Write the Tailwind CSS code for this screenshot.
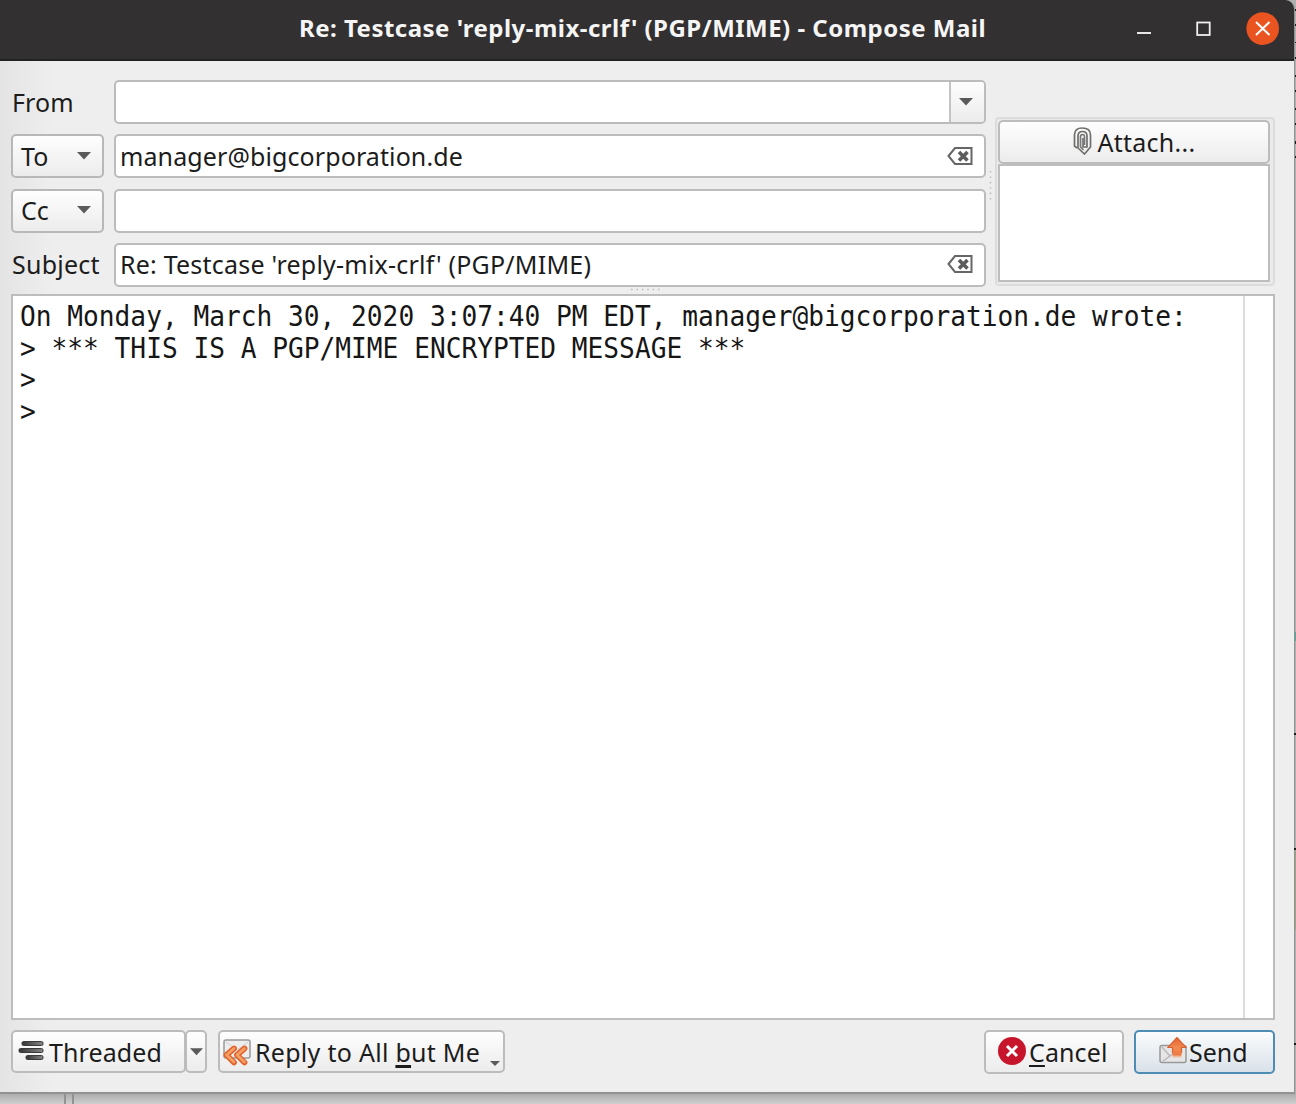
<!DOCTYPE html>
<html lang="en">
<head>
<meta charset="utf-8">
<title>Compose Mail</title>
<script src="https://cdn.jsdelivr.net/npm/@tailwindcss/browser@4"></script>
</head>
<body class="h-[1104px] w-[1296px] overflow-hidden bg-[#c3c3c3] font-['Noto_Sans',sans-serif] text-[25px] leading-[34px] text-[#1c1c1c]">
<div class="relative flex h-[1104px] w-[1296px] flex-col bg-[#b0b0b0]">
  <!-- window -->
  <div class="flex h-[1094px] w-[1295px] shrink-0 flex-col overflow-hidden rounded-tr-[9px] border-r border-b-2 border-[#929292] bg-[#eeeeee] bg-linear-to-r from-[#e4e4e4] to-[#eeeeee] to-[4%]">
    <header class="flex h-[61px] shrink-0 items-center border-b-2 border-[#222] bg-[#333031] text-[#f5f5f5]">
      <h1 class="ml-[299px] w-[830px] shrink-0 pb-[3px] text-[24px] font-bold tracking-[0.480px] whitespace-nowrap">Re: Testcase 'reply-mix-crlf' (PGP/MIME) - Compose Mail</h1>
      <svg class="mt-[-4px] h-[34px] w-[166px] shrink-0" viewBox="1129 10 166 34" fill="none">
        <path d="M1137 32H1151" stroke="#e6e6e6" stroke-width="2"/>
        <rect x="1197.2" y="21.5" width="12.5" height="12.5" stroke="#f0f0f0" stroke-width="1.8"/>
        <circle cx="1262.7" cy="27.6" r="16.3" fill="#e95420"/>
        <path d="M1256 21L1269.500 34M1269.500 21L1256 34" stroke="#fff" stroke-width="2"/>
      </svg>
    </header>

    <div class="flex h-[233px] shrink-0 pt-[19px] pl-[11px]">
      <!-- header fields -->
      <div class="grid h-[207px] w-[975px] grid-cols-[93px_872px] content-between gap-x-[10px]">
        <div class="flex h-[44px] items-center pb-px pl-px tracking-[0.100px]"><span>From</span></div>
        <div class="flex h-[44px] justify-end overflow-hidden rounded-[5px] border-2 border-[#bcbcbc] bg-white">
          <div class="flex w-[35px] items-center justify-center border-l-2 border-[#c4c4c4] bg-linear-to-b from-[#fdfdfd] to-[#ececec]">
            <svg class="mr-[3px] h-[8px] w-[14px]" viewBox="0 0 14 8"><path d="M0 0H14L7 7.500Z" fill="#5a5a5a"/></svg>
          </div>
        </div>

        <div class="flex h-[44px] items-center justify-between rounded-[5px] border-2 border-[#b8b8b8] bg-linear-to-b from-[#fefefe] to-[#ececec] pr-[11px] pb-px pl-[8px]"><span>To</span>
          <svg class="h-[8px] w-[14px]" viewBox="0 0 14 8"><path d="M0 0H14L7 7.500Z" fill="#5a5a5a"/></svg></div>
        <div class="flex h-[44px] items-center justify-between rounded-[5px] border-2 border-[#bcbcbc] bg-white pr-[11px] pb-px pl-[4px]"><span class="tracking-[0.100px]">manager@bigcorporation.de</span>
          <svg class="h-[18px] w-[26px]" viewBox="0 0 26 18" fill="none"><path d="M1.500 9L8 1H24.500V17H8Z" stroke="#666" stroke-width="2"/><path d="M12 5L20.500 13.500M20.500 5L12 13.500" stroke="#5c5c5c" stroke-width="3.600"/></svg></div>

        <div class="flex h-[44px] items-center justify-between rounded-[5px] border-2 border-[#b8b8b8] bg-linear-to-b from-[#fefefe] to-[#ececec] pr-[11px] pb-px pl-[8px]"><span>Cc</span>
          <svg class="h-[8px] w-[14px]" viewBox="0 0 14 8"><path d="M0 0H14L7 7.500Z" fill="#5a5a5a"/></svg></div>
        <div class="h-[44px] rounded-[5px] border-2 border-[#bcbcbc] bg-white"></div>

        <div class="flex h-[44px] items-center pb-px pl-px tracking-[0.250px]"><span>Subject</span></div>
        <div class="flex h-[44px] items-center justify-between rounded-[5px] border-2 border-[#bcbcbc] bg-white pr-[11px] pb-px pl-[4px]"><span class="tracking-[0.210px]">Re: Testcase 'reply-mix-crlf' (PGP/MIME)</span>
          <svg class="h-[18px] w-[26px]" viewBox="0 0 26 18" fill="none"><path d="M1.500 9L8 1H24.500V17H8Z" stroke="#666" stroke-width="2"/><path d="M12 5L20.500 13.500M20.500 5L12 13.500" stroke="#5c5c5c" stroke-width="3.600"/></svg></div>
      </div>

      <svg class="mt-[89px] h-[32px] w-[9px]" viewBox="0 0 9 32"><path d="M4.500 2V32" stroke="#bdbdbd" stroke-width="1.500" stroke-dasharray="1.600 3.800"/></svg>

      <!-- attachments -->
      <div class="mt-[37px] flex h-[169px] w-[280px] flex-col rounded-[4px] border-2 border-[#dcdcdc] bg-[#ebebeb] p-px">
        <div class="flex h-[44px] w-[272px] shrink-0 items-center justify-center gap-[6px] rounded-[5px] border-2 border-[#bcbcbc] bg-linear-to-b from-[#fefefe] to-[#ececec]">
          <svg class="-mt-[2px] h-[28px] w-[19px]" viewBox="0 0 19 28" fill="none" stroke="#6d706b" stroke-width="1.700"><path d="M4 21L1.500 19V7.500Q2 1 9 1Q17.500 1 17.500 8V20L11.500 27L5 21V9Q5 4.500 9.500 4.500Q14 4.500 14 9V20H10V11"/><path d="M7.500 20V10Q7.500 7.500 9.500 7.500Q11.500 7.500 11.500 10V18M7.500 20L10.500 23" stroke="#777"/></svg>
          <span class="tracking-[0.250px]">Attach...</span>
        </div>
        <div class="h-[118px] w-[272px] border-2 border-[#bebebe] bg-white"></div>
      </div>
    </div>

    <!-- message body -->
    <div class="ml-[11px] flex h-[726px] w-[1264px] shrink-0 justify-between border-2 border-[#bdbdbd] bg-white">
      <div class="mt-[5px] ml-[7px] origin-top-left scale-y-[1.070] font-['DejaVu_Sans_Mono',monospace] text-[26.200px] leading-[29.530px] whitespace-pre text-[#161616]"><p>On Monday, March 30, 2020 3:07:40 PM EDT, manager@bigcorporation.de wrote:</p><p>&gt; *** THIS IS A PGP/MIME ENCRYPTED MESSAGE ***</p><p>&gt;</p><p>&gt;</p></div>
      <div class="w-[30px] shrink-0 border-l-2 border-[#dcdcdc]"></div>
    </div>

    <!-- actions -->
    <footer class="flex shrink-0 pt-[10px] pl-[11px]">
      <div class="flex h-[43px] w-[175px] items-center gap-[5px] rounded-[5px] border-2 border-[#bcbcbc] bg-linear-to-b from-[#fefefe] to-[#ececec] pl-[5px]">
        <svg class="-mt-[2px] h-[20px] w-[26px] shrink-0" viewBox="0 0 26 20"><defs><linearGradient id="bar"><stop offset="0" stop-color="#333"/><stop offset="1" stop-color="#858585"/></linearGradient></defs><g fill="url(#bar)" stroke="#3a3a3a" stroke-width="1"><rect x="4" y="0.500" width="21" height="4" rx="1.500"/><rect x="1" y="7.500" width="24" height="4" rx="1.500"/><rect x="8" y="14.500" width="17" height="4" rx="1.500"/></g></svg>
        <span class="tracking-[0.100px]">Threaded</span>
      </div>
      <div class="-ml-px flex h-[43px] w-[22px] items-center justify-center rounded-[5px] border-2 border-[#bcbcbc] bg-linear-to-b from-[#fefefe] to-[#ececec]">
        <svg class="h-[8px] w-[13px] shrink-0" viewBox="0 0 14 8"><path d="M0 0H14L7 7.500Z" fill="#5a5a5a"/></svg>
      </div>
      <div class="ml-[11px] flex h-[43px] w-[287px] items-center rounded-[5px] border-2 border-[#bcbcbc] bg-linear-to-b from-[#fefefe] to-[#ececec] pl-[2px]">
        <svg class="h-[28px] w-[29px] shrink-0" viewBox="0 0 29 28" fill="none"><rect x="2" y="2" width="26" height="18" rx="2" fill="#ededed" stroke="#999" stroke-width="1.500"/><path d="M4 4L15 12L26 4" stroke="#d0d0d0"/><g stroke-linecap="round" stroke-linejoin="round"><path d="M12 10.500L4.500 17L12 24.500M22.500 10.500L15 17L22.500 24.500" stroke="#e2642f" stroke-width="5.800"/><path d="M12 10.500L4.500 17L12 24M22.500 10.500L15 17L22.500 24" stroke="#f5a064" stroke-width="2.600"/></g></svg>
        <span class="ml-[4px] w-[228px] tracking-[0.280px] whitespace-nowrap">Reply to All <span class="underline decoration-[3px] underline-offset-[3px] [text-decoration-skip-ink:none]">b</span>ut Me</span>
        <svg class="mt-[23px] ml-[7px] h-[5px] w-[10px] shrink-0" viewBox="0 0 10 5"><path d="M0 0H10L5 5Z" fill="#5a5a5a"/></svg>
      </div>
      <div class="ml-[479px] flex h-[44px] w-[140px] items-center rounded-[5px] border-2 border-[#bcbcbc] bg-linear-to-b from-[#fefefe] to-[#ececec] pl-[12px]">
        <svg class="-mt-[3px] h-[28px] w-[28px] shrink-0" viewBox="0 0 28 28"><circle cx="14" cy="14" r="14" fill="#c7162b"/><path d="M9 9L19 19M19 9L9 19" stroke="#fff" stroke-width="3"/></svg>
        <span class="ml-[3px] tracking-[0.100px]"><span class="underline decoration-2 underline-offset-[3px]">C</span>ancel</span>
      </div>
      <div class="ml-[10px] flex h-[44px] w-[141px] items-center rounded-[5px] border-2 border-[#4d8db4] bg-linear-to-b from-[#fafcfd] to-[#d9e1e9] pl-[23px]">
        <svg class="-mt-[3px] h-[28px] w-[28px] shrink-0" viewBox="0 0 28 28"><rect x="1" y="8.500" width="26" height="17" rx="2" fill="#e6e6e6" stroke="#999" stroke-width="1.500"/><path d="M3 10L11 19L4 24M11 19L15 16" stroke="#b8b8b8" fill="none" stroke-width="1.500"/><defs><linearGradient id="up" x2="0" y2="1"><stop offset="0" stop-color="#e8622c"/><stop offset=".5" stop-color="#f08b54"/><stop offset=".85" stop-color="#ee7a45"/><stop offset="1" stop-color="#f6c5a6" stop-opacity=".3"/></linearGradient></defs><path d="M18 0.500L27 10.500H22.500V21H13.500V10.500H9Z" fill="url(#up)"/><path d="M22.500 16V10.500H27L18 0.500L9 10.500H13.500V16" fill="none" stroke="#d9622f" stroke-width="1.200"/></svg>
        <span class="ml-[2px]">Send</span>
      </div>
    </footer>
  </div>

  <!-- backdrop strip under the window -->
  <div class="flex h-[10px] w-full bg-linear-to-b from-[#adadad] to-[#cfcfcf]">
    <div class="ml-[64px] w-[10px] border-x-2 border-[#929292]"></div>
  </div>

  <!-- splitter grip above the message body -->
  <svg class="absolute top-[288px] left-[630px] h-[3px] w-[32px]" viewBox="0 0 32 3"><path d="M1 1.500H30" stroke="#bdbdbd" stroke-width="1.500" stroke-dasharray="1.600 3.800"/></svg>

  <!-- slivers of the window behind, at the right edge -->
  <svg class="absolute top-0 left-[1294px] h-[1104px] w-[2px]" viewBox="0 0 2 1104"><g fill="#1a1a1a"><rect x="1" y="9" width="1" height="2"/><rect x="1" y="24" width="1" height="2"/><rect x="1" y="42" width="1" height="1"/><rect x="1" y="57" width="1" height="2"/><rect x="1" y="75" width="1" height="2"/><rect x="1" y="90" width="1" height="2"/><rect x="1" y="108" width="1" height="2"/><rect x="1" y="123" width="1" height="2"/><rect x="1" y="141" width="1" height="3"/><rect x="1" y="156" width="1" height="2"/><rect y="733" width="2" height="2"/><rect y="848" width="2" height="2"/><rect y="1043" width="2" height="2"/></g><rect x="1" y="632" width="1" height="9" fill="#52a89a"/><rect x="1" y="850" width="1" height="80" fill="#a09f83"/></svg>
</div>
</body>
</html>
